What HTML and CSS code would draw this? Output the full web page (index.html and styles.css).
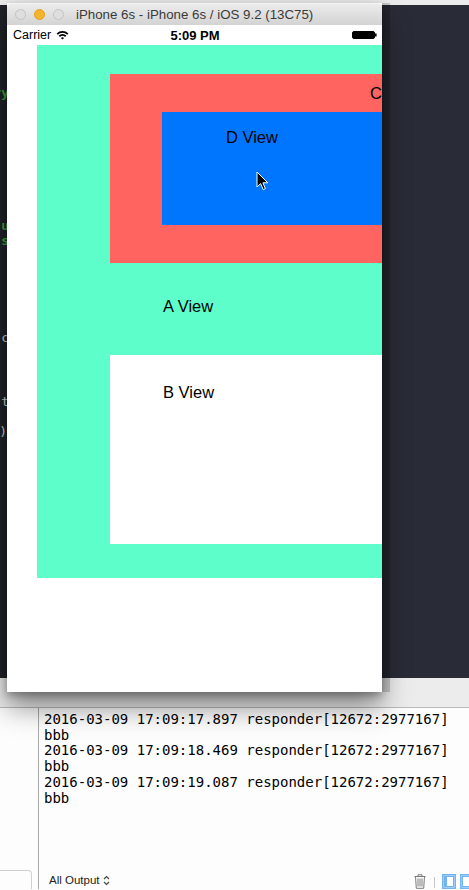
FILE: index.html
```html
<!DOCTYPE html>
<html>
<head>
<meta charset="utf-8">
<link rel="stylesheet" href="styles.css">
</head>
<body>
<div class="top-strip"></div>
<div class="editor">
  <div class="code-col">
    <div class="cl green-code l1"><span>ry</span></div>
    <div class="cl green-code l2"><span>u</span></div>
    <div class="cl green-code l3"><span>s</span></div>
    <div class="cl l4"><span>c</span></div>
    <div class="cl l5"><span>t</span></div>
    <div class="cl l6"><span>)</span></div>
  </div>
</div>
<div class="debugbar"></div>
<div class="console">
  <div class="vars">
    <div class="filter"></div>
  </div>
  <div class="log">
    <div class="line">2016-03-09 17:09:17.897 responder[12672:2977167]</div>
    <div class="line">bbb</div>
    <div class="line">2016-03-09 17:09:18.469 responder[12672:2977167]</div>
    <div class="line">bbb</div>
    <div class="line">2016-03-09 17:09:19.087 responder[12672:2977167]</div>
    <div class="line">bbb</div>
    <div class="log-footer">
      <span class="output-sel">All Output
        <svg class="updown" width="7" height="11" viewBox="0 0 7 11"><path d="M1 4 L3.5 1.5 L6 4 M1 7 L3.5 9.5 L6 7" fill="none" stroke="#444" stroke-width="1.1"/></svg>
      </span>
      <span class="footer-icons">
        <svg width="12" height="15" viewBox="0 0 12 15"><path d="M0.5 2.5 H11.5 M4 2.5 V0.8 H8 V2.5 M1.5 2.5 L2.3 14.3 H9.7 L10.5 2.5 M4 4.5 V12.5 M6 4.5 V12.5 M8 4.5 V12.5" fill="none" stroke="#7a7a7a" stroke-width="1"/></svg>
        <span class="sep"></span>
        <svg width="14" height="15" viewBox="0 0 14 15"><rect x="0.75" y="0.75" width="12.5" height="13.5" fill="#cfe5fb" stroke="#71b3f3" stroke-width="1.5"/><rect x="2.5" y="2.5" width="9" height="10" fill="#fff" stroke="#71b3f3" stroke-width="1"/><rect x="2.5" y="2.5" width="2.5" height="10" fill="#71b3f3"/></svg>
        <svg width="12" height="15" viewBox="0 0 12 15"><rect x="0.75" y="0.75" width="12.5" height="13.5" fill="#cfe5fb" stroke="#71b3f3" stroke-width="1.5"/><rect x="2.5" y="2.5" width="9" height="10" fill="#fff" stroke="#71b3f3" stroke-width="1"/></svg>
      </span>
    </div>
  </div>
</div>

<div class="sim-window">
  <div class="titlebar">
    <span class="light gray"></span>
    <span class="light yellow"></span>
    <span class="light gray"></span>
    <span class="title">iPhone 6s - iPhone 6s / iOS 9.2 (13C75)</span>
  </div>
  <div class="screen">
    <div class="statusbar">
      <div class="sb-left">Carrier
        <svg width="13" height="10" viewBox="0 0 13 10"><path d="M0.6 3.4 A8.5 8.5 0 0 1 12.4 3.4 L11.2 4.7 A6.8 6.8 0 0 0 1.8 4.7 Z" fill="#000"/><path d="M2.7 5.6 A5.5 5.5 0 0 1 10.3 5.6 L9.1 6.9 A3.8 3.8 0 0 0 3.9 6.9 Z" fill="#000"/><path d="M4.9 7.9 A2.3 2.3 0 0 1 8.1 7.9 L6.5 9.6 Z" fill="#000"/></svg>
      </div>
      <div class="sb-time">5:09 PM</div>
      <div class="sb-right">
        <svg width="25" height="8" viewBox="0 0 25 8"><rect x="0.5" y="0.5" width="22" height="7" rx="1.5" fill="#000" stroke="#000"/><rect x="23" y="2.5" width="1.6" height="3" fill="#000"/></svg>
      </div>
    </div>
    <div class="view-a">
      <div class="view-c">
        <div class="label c-label">C View</div>
        <div class="view-d">
          <div class="label">D View</div>
        </div>
      </div>
      <div class="label a-label">A View</div>
      <div class="view-b">
        <div class="label">B View</div>
      </div>
    </div>
  </div>
</div>

<svg class="cursor" width="13" height="20" viewBox="0 0 13 20"><path d="M1 1 L1 16 L4.6 12.6 L7.2 18.6 L9.4 17.6 L6.9 11.8 L11.8 11.8 Z" fill="#000" stroke="#fff" stroke-width="1"/></svg>
</body>
</html>
```
FILE: styles.css
```css
html, body {
  margin: 0;
  padding: 0;
}
body {
  width: 469px;
  height: 890px;
  overflow: hidden;
  position: relative;
  background: #fdfdfd;
  font-family: "Liberation Sans", Arial, sans-serif;
}
.top-strip {
  height: 5px;
  background: #ececec;
}
.editor {
  height: 673px;
  background: #292b36;
  display: flex;
}
.code-col {
  width: 7px;
  background: #21232a;
  overflow: hidden;
  font-family: "DejaVu Sans Mono", monospace;
  font-size: 13px;
  color: #d4d4d4;
  display: flex;
  flex-direction: column;
}
.cl {
  height: 16px;
  line-height: 16px;
  display: flex;
  justify-content: flex-end;
  white-space: nowrap;
}
.cl span { flex: none; margin-right: -2px; }
.green-code { color: #3fa63f; font-weight: bold; }
.l1 { margin-top: 80px; }
.l2 { margin-top: 117px; }
.l3 { margin-top: -1px; }
.l4 { margin-top: 81px; }
.l5 { margin-top: 48px; }
.l6 { margin-top: 14px; }
.l6 span { margin-right: 0; }

.debugbar {
  height: 29px;
  background: #ececec;
  border-bottom: 1px solid #b9b9b9;
}
.console {
  height: 181px;
  display: flex;
}
.vars {
  width: 38px;
  border-right: 1px solid #a9a9a9;
  display: flex;
  flex-direction: column;
  justify-content: flex-end;
}
.filter {
  height: 18px;
  width: 31px;
  border: 1px solid #cfcfcf;
  border-bottom: 0;
  border-left: 0;
  border-radius: 0 4px 0 0;
}
.log {
  flex: 1;
  padding: 4px 0 0 5px;
  display: flex;
  flex-direction: column;
  font-family: "DejaVu Sans Mono", "Liberation Mono", monospace;
  font-size: 14px;
  line-height: 15.7px;
  color: #000;
}
.line { white-space: nowrap; }
.log-footer {
  margin-top: auto;
  height: 17px;
  display: flex;
  align-items: center;
  justify-content: space-between;
  font-family: "Liberation Sans", Arial, sans-serif;
  font-size: 11.5px;
  color: #222;
}
.output-sel {
  display: flex;
  align-items: center;
  gap: 3px;
  padding-left: 5px;
}
.footer-icons {
  display: flex;
  align-items: flex-end;
  gap: 4px;
  margin-right: -3px;
  padding-top: 2px;
}
.footer-icons .sep {
  width: 1px;
  height: 11px;
  background: #c6c6c6;
  margin: 0 3px 1px 4px;
}

/* simulator window */
.sim-window {
  position: absolute;
  left: 7px;
  top: 3px;
  width: 375px;
  background: #fff;
  box-shadow: 8px 0 0 0 rgba(0,0,0,0.16), 0 16px 26px rgba(0,0,0,0.42), 0 3px 8px rgba(0,0,0,0.3);
}
.titlebar {
  height: 21px;
  background: linear-gradient(#ececec, #d3d3d3);
  border-top: 1px solid #f4f4f4;
  display: flex;
  align-items: center;
  padding-left: 8px;
  gap: 8px;
  border-radius: 4px 4px 0 0;
}
.light {
  width: 11px;
  height: 11px;
  border-radius: 50%;
  box-sizing: border-box;
  flex: none;
}
.light.gray { background: #dedede; border: 1px solid #c4c4c4; }
.light.yellow { background: #f6b42c; border: 1px solid #e0a023; }
.title {
  margin-left: 4px;
  font-size: 13.3px;
  color: #3a3a3a;
  white-space: nowrap;
}
.screen {
  height: 667px;
  overflow: hidden;
  background: #fff;
}
.statusbar {
  height: 20px;
  display: flex;
  align-items: center;
  justify-content: space-between;
  padding: 0 5px 0 6px;
  font-size: 12.5px;
  color: #000;
}
.sb-left {
  width: 90px;
  display: flex;
  align-items: center;
  gap: 5px;
}
.sb-time {
  font-weight: bold;
  font-size: 13px;
}
.sb-right {
  width: 90px;
  display: flex;
  justify-content: flex-end;
}
.label {
  font-size: 16.5px;
  line-height: 20px;
  color: #000;
  white-space: nowrap;
}
.view-a {
  margin-left: 30px;
  width: 420px;
  height: 533px;
  box-sizing: border-box;
  background: #5efecb;
  padding-top: 29px;
}
.view-c {
  margin-left: 73px;
  height: 189px;
  box-sizing: border-box;
  background: #ff6461;
  padding-top: 9px;
}
.c-label { padding-left: 260px; }
.view-d {
  margin-top: 9px;
  margin-left: 52px;
  height: 113px;
  box-sizing: border-box;
  background: #0076ff;
  padding: 15px 0 0 64px;
}
.a-label {
  margin: 33px 0 39px 126px;
}
.view-b {
  margin-left: 73px;
  height: 189px;
  box-sizing: border-box;
  background: #fff;
  padding: 27px 0 0 53px;
}
.cursor {
  position: absolute;
  left: 256px;
  top: 171px;
}
```
